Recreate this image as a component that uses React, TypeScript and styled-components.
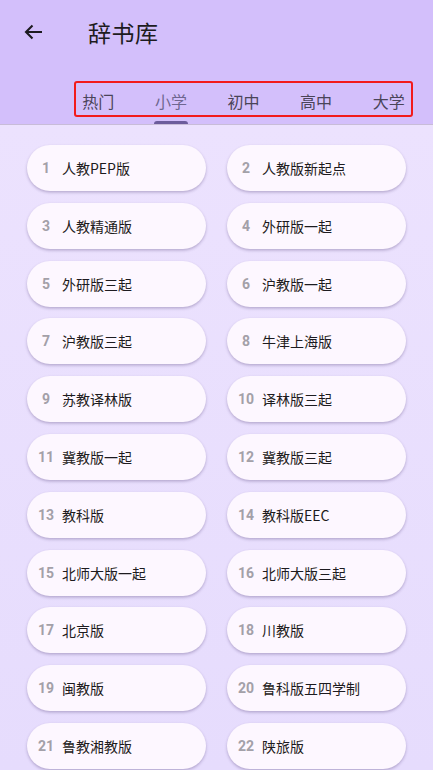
import React from "react";
import styled, { createGlobalStyle } from "styled-components";

const Global = createGlobalStyle`
  html, body { margin: 0; padding: 0; }
  body {
    width: 433px;
    height: 770px;
    overflow: hidden;
    font-family: Roboto, "Noto Sans CJK SC", sans-serif;
    background: #e9dffd;
  }
`;

const Page = styled.div`
  width: 433px;
  height: 770px;
  display: flex;
  flex-direction: column;
  overflow: hidden;
`;

const Header = styled.header`
  background: #d3bffb;
  height: 124px;
  display: flex;
  flex-direction: column;
  border-bottom: 1px solid #c8bcd8;
  box-sizing: content-box;
`;

const TopBar = styled.div`
  height: 68px;
  display: flex;
  align-items: center;
  padding-left: 20px;
  padding-bottom: 4px;
  box-sizing: border-box;
`;

const BackButton = styled.button`
  width: 28px;
  height: 28px;
  padding: 0;
  border: none;
  background: transparent;
  display: flex;
  align-items: center;
  justify-content: center;
  color: #1d1b20;
`;

const Title = styled.h1`
  margin: 0 0 0 40px;
  font-family: "Noto Sans CJK SC", sans-serif;
  font-weight: 400;
  font-size: 23px;
  color: #1d1b20;
  letter-spacing: 0.5px;
`;

const TabBar = styled.div`
  position: relative;
  height: 56px;
  display: flex;
  padding-left: 62px;
`;

const Highlight = styled.div`
  position: absolute;
  left: 74px;
  top: 13px;
  width: 339px;
  height: 36px;
  box-sizing: border-box;
  border: 2px solid #f21b1b;
  border-radius: 3px;
  pointer-events: none;
`;

const Tab = styled.div<{ $active?: boolean }>`
  position: relative;
  width: 72.6px;
  display: flex;
  align-items: center;
  justify-content: center;
  padding-top: 10px;
  box-sizing: border-box;
  font-family: "Noto Sans CJK SC", sans-serif;
  font-size: 16px;
  color: ${(p) => (p.$active ? "#6e6690" : "#4a4458")};
`;

const Indicator = styled.div`
  position: absolute;
  bottom: 0;
  left: 50%;
  transform: translateX(-50%);
  width: 34px;
  height: 3px;
  border-radius: 3px 3px 0 0;
  background: #6c5c9c;
`;

const Body = styled.main`
  flex: 1;
  background: linear-gradient(180deg, #ece2fe 0%, #e6dcfd 100%);
  padding: 20px 27px 0;
`;

const Grid = styled.div`
  display: grid;
  grid-template-columns: 179px 179px;
  column-gap: 21px;
  row-gap: 11.8px;
`;

const Card = styled.div`
  height: 46px;
  border-radius: 23px;
  background: #fdf7ff;
  box-shadow: 0 1.5px 3px rgba(60, 40, 100, 0.3);
  display: flex;
  align-items: center;
  padding-left: 8px;
`;

const Num = styled.span`
  width: 22px;
  text-align: center;
  font-family: Roboto, sans-serif;
  font-weight: 700;
  font-size: 14px;
  color: #a3a0a8;
`;

const Label = styled.span`
  margin-left: 5px;
  font-family: "Noto Sans CJK SC", sans-serif;
  font-size: 14px;
  color: #1d1b20;
  font-weight: 400;
`;

const tabs = ["热门", "小学", "初中", "高中", "大学"];
const books = [
  "人教PEP版",
  "人教版新起点",
  "人教精通版",
  "外研版一起",
  "外研版三起",
  "沪教版一起",
  "沪教版三起",
  "牛津上海版",
  "苏教译林版",
  "译林版三起",
  "冀教版一起",
  "冀教版三起",
  "教科版",
  "教科版EEC",
  "北师大版一起",
  "北师大版三起",
  "北京版",
  "川教版",
  "闽教版",
  "鲁科版五四学制",
  "鲁教湘教版",
  "陕旅版",
];

export default function App() {
  return (
    <Page>
      <Global />
      <Header>
        <TopBar>
          <BackButton aria-label="back">
            <svg width="24" height="24" viewBox="0 0 24 24">
              <path
                d="M20 12H4M10.5 5.5L4 12l6.5 6.5"
                fill="none"
                stroke="currentColor"
                strokeWidth="2.1"
              />
            </svg>
          </BackButton>
          <Title>辞书库</Title>
        </TopBar>
        <TabBar>
          {tabs.map((t, i) => (
            <Tab key={t} $active={i === 1}>
              {t}
              {i === 1 && <Indicator />}
            </Tab>
          ))}
          <Highlight />
        </TabBar>
      </Header>
      <Body>
        <Grid>
          {books.map((b, i) => (
            <Card key={b}>
              <Num>{i + 1}</Num>
              <Label>{b}</Label>
            </Card>
          ))}
        </Grid>
      </Body>
    </Page>
  );
}
